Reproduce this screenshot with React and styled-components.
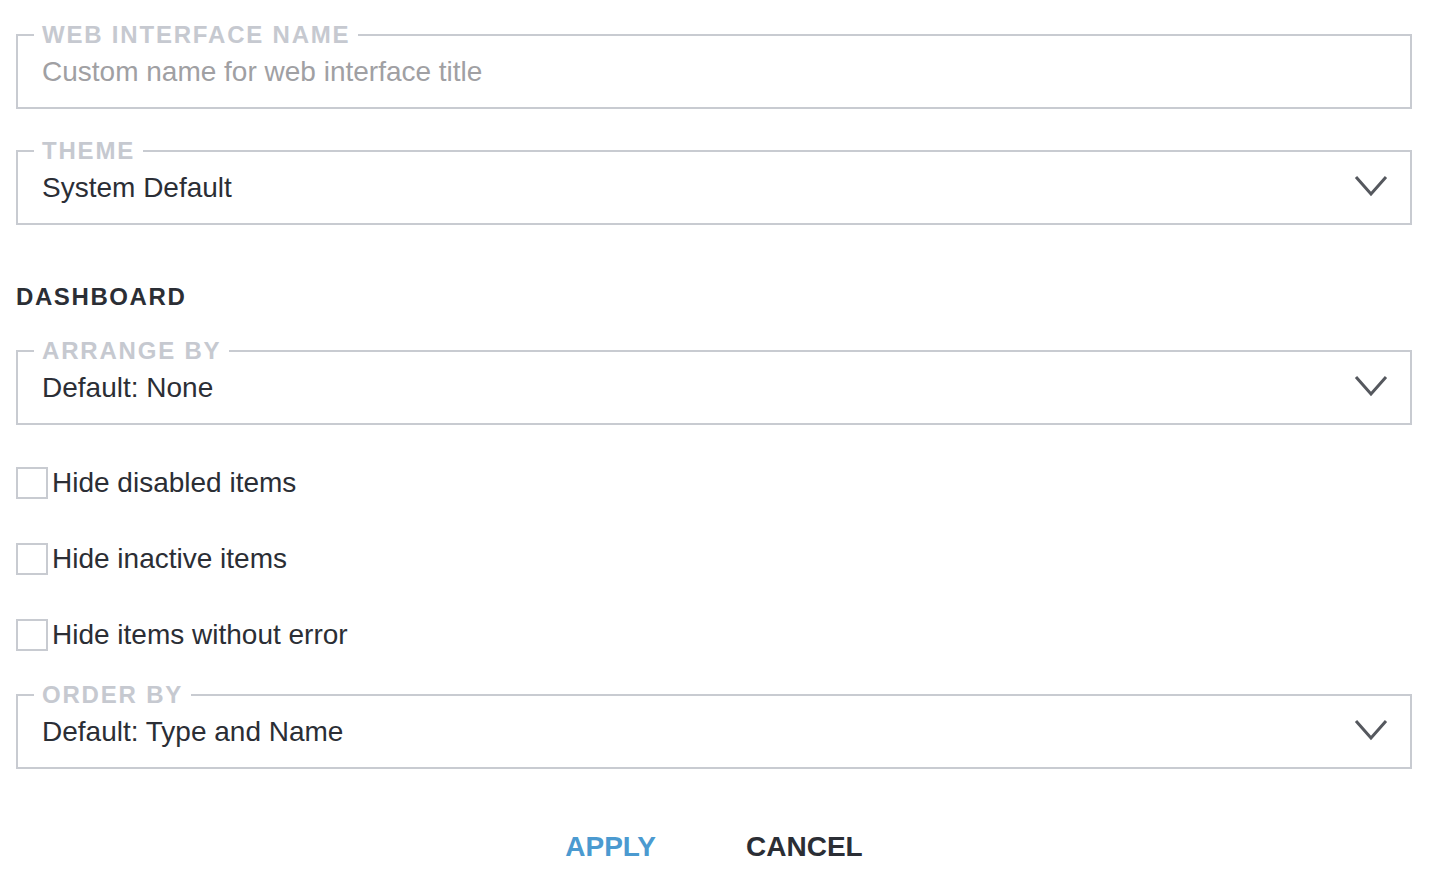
import React, { useState } from 'react';
import styled, { createGlobalStyle } from 'styled-components';

const GlobalStyle = createGlobalStyle`
  html, body {
    margin: 0;
    padding: 0;
    background: #ffffff;
    font-family: "Liberation Sans", Arial, Helvetica, sans-serif;
    color: #2b2e35;
  }
`;

const Page = styled.div`
  padding: 23px 20px 20px 16px;
`;

const Field = styled.fieldset`
  margin: 0 0 30px 0;
  padding: 9px 22px 19px 24px;
  min-width: 0;
  border: 2px solid #c8cbd1;
`;

const Legend = styled.legend`
  margin-left: -8px;
  padding: 0 8px;
  font-size: 24px;
  line-height: 24px;
  font-weight: 700;
  letter-spacing: 1.8px;
  color: #c6c9d0;
  text-transform: uppercase;
`;

const TextInput = styled.input`
  display: block;
  width: 100%;
  height: 32px;
  padding: 0;
  border: none;
  outline: none;
  background: transparent;
  font-family: inherit;
  font-size: 28px;
  line-height: 32px;
  color: #2b2e35;

  &::placeholder {
    color: #a0a0a3;
  }
`;

const SelectRow = styled.div`
  display: flex;
  align-items: center;
  justify-content: space-between;
  height: 32px;
  cursor: pointer;
`;

const SelectValue = styled.span`
  font-size: 28px;
  line-height: 32px;
  color: #2b2e35;
`;

const Chevron = styled.svg`
  width: 34px;
  height: 23px;
  margin-top: -5px;
  flex-shrink: 0;
`;

const SectionTitle = styled.h3`
  margin: 60px 0 30px 0;
  font-size: 24px;
  line-height: 24px;
  font-weight: 700;
  letter-spacing: 1.6px;
  color: #2b2e35;
`;

const CheckList = styled.div`
  display: flex;
  flex-direction: column;
  gap: 44px;
  margin: 42px 0 32px 0;
`;

const CheckRow = styled.label`
  display: flex;
  align-items: center;
  gap: 4px;
  height: 32px;
  cursor: pointer;
`;

const Box = styled.span`
  box-sizing: border-box;
  width: 32px;
  height: 32px;
  border: 2px solid #c8cbd1;
  background: ${p => (p.$checked ? '#4b9ad0' : '#fff')};
  flex-shrink: 0;
`;

const CheckLabel = styled.span`
  font-size: 28px;
  line-height: 32px;
  color: #2b2e35;
`;

const Actions = styled.div`
  display: flex;
  justify-content: center;
  gap: 90px;
  margin-top: 62px;
`;

const ActionButton = styled.button`
  padding: 0;
  border: none;
  background: none;
  font-family: inherit;
  font-size: 28px;
  line-height: 32px;
  font-weight: 700;
  color: ${p => (p.$primary ? '#4b9ad0' : '#2b2e35')};
  cursor: pointer;
`;

const Select = ({ label, value }) => (
  <Field>
    <Legend>{label}</Legend>
    <SelectRow>
      <SelectValue>{value}</SelectValue>
      <Chevron viewBox="0 0 34 23">
        <polyline points="2,3 17,20 32,3" fill="none" stroke="#55585e" strokeWidth="3" />
      </Chevron>
    </SelectRow>
  </Field>
);

const checks = ['Hide disabled items', 'Hide inactive items', 'Hide items without error'];

const App = () => {
  const [checked, setChecked] = useState({});

  return (
    <Page>
      <GlobalStyle />
      <Field>
        <Legend>Web Interface Name</Legend>
        <TextInput placeholder="Custom name for web interface title" />
      </Field>
      <Select label="Theme" value="System Default" />

      <SectionTitle>DASHBOARD</SectionTitle>
      <Select label="Arrange By" value="Default: None" />

      <CheckList>
        {checks.map(c => (
          <CheckRow key={c} onClick={() => setChecked(s => ({ ...s, [c]: !s[c] }))}>
            <Box $checked={checked[c]} />
            <CheckLabel>{c}</CheckLabel>
          </CheckRow>
        ))}
      </CheckList>

      <Select label="Order By" value="Default: Type and Name" />

      <Actions>
        <ActionButton $primary>APPLY</ActionButton>
        <ActionButton>CANCEL</ActionButton>
      </Actions>
    </Page>
  );
};

export default App;
